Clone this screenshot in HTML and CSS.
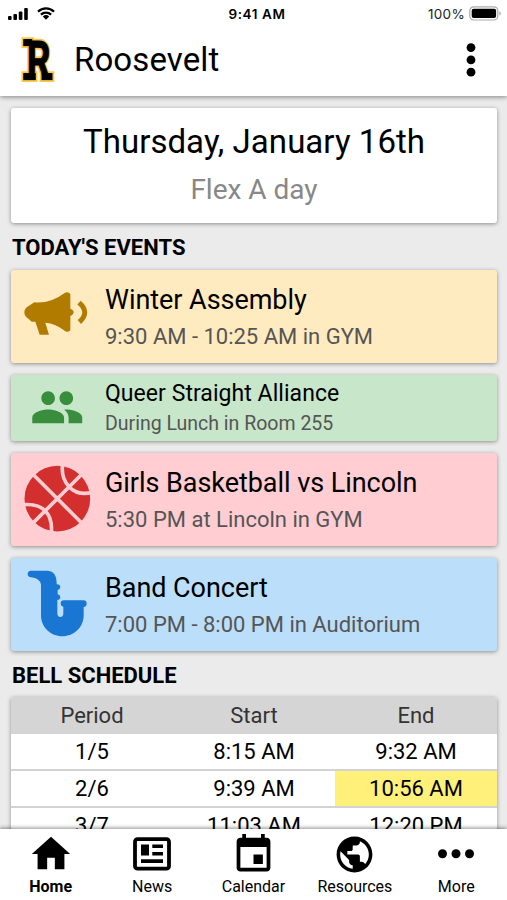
FILE: index.html
```html
<!DOCTYPE html>
<html lang="en">
<head>
<meta charset="utf-8">
<title>Roosevelt</title>
<link rel="stylesheet" href="styles.css">
</head>
<body>
<div class="app">
  <header class="top">
    <div class="status">
      <div class="status-left">
        <svg class="signal" viewBox="0 0 20 12"><rect x="0" y="8" width="3.6" height="4" rx="1"/><rect x="5.4" y="6" width="3.6" height="6" rx="1"/><rect x="10.8" y="3.5" width="3.6" height="8.5" rx="1"/><rect x="16.2" y="0" width="3.6" height="12" rx="1"/></svg>
        <svg class="wifi" viewBox="0 0 18 13"><path d="M1 4.6a11.6 11.6 0 0 1 16 0M3.9 7.6a7.4 7.4 0 0 1 10.2 0" fill="none" stroke="#000" stroke-width="2.2"/><path d="M5.8 9.6a4.7 4.7 0 0 1 6.4 0L9 12.8z"/></svg>
      </div>
      <span class="clock">9:41 AM</span>
      <div class="status-right">
        <span class="charge">100%</span>
        <svg class="battery" viewBox="0 0 32 15"><rect x=".8" y=".8" width="28" height="13.2" rx="4" fill="#fff" stroke="#aaa" stroke-width="1.2"/><rect x="2.7" y="2.7" width="24.4" height="9.4" rx="2"/><path d="M30.3 5.2q1.5.6 1.5 2.2t-1.5 2.2z" fill="#aaa"/></svg>
      </div>
    </div>
    <div class="bar">
      <svg class="logo" viewBox="0 0 36 48">
        <g class="logo-edge"><text transform="translate(18.7 42.7) scale(.68 1)" text-anchor="middle">R</text><rect x="3.8" y="3.6" width="8" height="6"/><rect x="3.8" y="37.6" width="11.4" height="6"/><rect x="22" y="37.6" width="10" height="6"/></g>
        <g class="logo-face"><text transform="translate(18.7 42.7) scale(.68 1)" text-anchor="middle">R</text><rect x="3.8" y="3.6" width="8" height="6"/><rect x="3.8" y="37.6" width="11.4" height="6"/><rect x="22" y="37.6" width="10" height="6"/></g>
      </svg>
      <h1>Roosevelt</h1>
      <svg class="menu" viewBox="0 0 10 34"><circle cx="5" cy="4.6" r="4.4"/><circle cx="5" cy="16.9" r="4.4"/><circle cx="5" cy="29.2" r="4.4"/></svg>
    </div>
  </header>

  <main>
    <section class="card day"><div class="date">Thursday, January 16th</div><div class="kind">Flex A day</div></section>

    <h2>TODAY'S EVENTS</h2>
    <div class="events">
      <article class="card event gold">
        <div class="pic"><svg viewBox="63 60 216 216"><path d="M103 127Q150 132 194 99Q204 94 211 102V146Q221 150 221 157T211 168V211Q202 220 192 211Q168 191 136 188L147 224H119L106 185H95L86 177Q73 169 73 157T86 138Z"/><path d="M237 128Q271 157 238 186" fill="none" stroke="currentColor" stroke-width="15"/></svg></div>
        <div><div class="name">Winter Assembly</div><div class="info">9:30 AM - 10:25 AM in GYM</div></div>
      </article>
      <article class="card event green small">
        <div class="pic"><svg viewBox="0 0 24 24"><path d="M16 11c1.66 0 2.99-1.34 2.99-3S17.66 5 16 5s-3 1.34-3 3 1.34 3 3 3zm-8 0c1.66 0 2.99-1.34 2.99-3S9.66 5 8 5 5 6.34 5 8s1.34 3 3 3zm0 2c-2.33 0-7 1.17-7 3.5V19h14v-2.5c0-2.33-4.67-3.5-7-3.5zm8 0c-.29 0-.62.02-.97.05 1.16.84 1.97 1.97 1.97 3.45V19h6v-2.5c0-2.33-4.67-3.5-7-3.5z"/></svg></div>
        <div><div class="name">Queer Straight Alliance</div><div class="info">During Lunch in Room 255</div></div>
      </article>
      <article class="card event red">
        <div class="pic"><svg viewBox="63 54 216 216"><circle cx="172" cy="161" r="98.5"/><path class="seam" d="M101 90L245 234M243 90L101 232M188 58Q182 98 207 125T275 143M70 179Q114 175 136 198T154 264"/></svg></div>
        <div><div class="name">Girls Basketball vs Lincoln</div><div class="info">5:30 PM at Lincoln in GYM</div></div>
      </article>
      <article class="card event blue">
        <div class="pic"><svg viewBox="63 370 216 216"><path d="M93 378H144Q170 380 170 415V419Q181 420 181 427T173 436V449Q181 451 181 458T172 466V506Q172 517 181 517T190 506V486Q182 484 182 477Q182 467 192 467H250Q260 467 260 477Q260 485 251 487V512C251 548 222 575 187 575S123 548 123 512V420Q119 400 93 398Q83 397 83 388T93 378Z"/></svg></div>
        <div><div class="name">Band Concert</div><div class="info">7:00 PM - 8:00 PM in Auditorium</div></div>
      </article>
    </div>

    <h2 class="bell">BELL SCHEDULE</h2>
    <table class="card">
      <thead><tr><th>Period</th><th>Start</th><th>End</th></tr></thead>
      <tbody>
        <tr><td>1/5</td><td>8:15 AM</td><td>9:32 AM</td></tr>
        <tr><td>2/6</td><td>9:39 AM</td><td class="now">10:56 AM</td></tr>
        <tr><td>3/7</td><td>11:03 AM</td><td>12:20 PM</td></tr>
      </tbody>
    </table>
  </main>

  <nav>
    <a class="on"><svg class="i-home" viewBox="0 0 24 24"><path d="M10 20v-6h4v6h5v-8h3L12 3 2 12h3v8z"/></svg><span>Home</span></a>
    <a><svg class="i-news" viewBox="0 0 38 46"><rect x="2" y="8.1" width="34" height="29.6" rx="2.5" fill="none" stroke="#000" stroke-width="3.8"/><path d="M8 13.5h8v11H8zM19.3 13.5h10.7v3.6H19.3zM19.3 21h10.7v3.5H19.3zM8 28.3h22v3.6H8z"/></svg><span>News</span></a>
    <a><svg class="i-cal" viewBox="0 0 24 24"><path d="M17 12h-5v5h5v-5zM16 1v2H8V1H6v2H5c-1.11 0-1.99.9-1.99 2L3 19c0 1.1.89 2 2 2h14c1.1 0 2-.9 2-2V5c0-1.1-.9-2-2-2h-1V1h-2zm3 18H5V8h14v11z"/></svg><span>Calendar</span></a>
    <a><svg class="i-globe" viewBox="0 0 24 24"><path d="M12 2C6.48 2 2 6.48 2 12s4.48 10 10 10 10-4.48 10-10S17.52 2 12 2zm-1 17.93c-3.95-.49-7-3.85-7-7.93 0-.62.08-1.21.21-1.79L9 15v1c0 1.1.9 2 2 2v1.93zm6.9-2.54c-.26-.81-1-1.39-1.9-1.39h-1v-3c0-.55-.45-1-1-1H8v-2h2c.55 0 1-.45 1-1V7h2c1.1 0 2-.9 2-2v-.41c2.93 1.19 5 4.06 5 7.41 0 2.08-.8 3.97-2.1 5.39z"/></svg><span>Resources</span></a>
    <a><svg class="i-more" viewBox="0 0 38 46"><circle cx="5.5" cy="22.7" r="4.5"/><circle cx="19" cy="22.7" r="4.5"/><circle cx="32.5" cy="22.7" r="4.5"/></svg><span>More</span></a>
  </nav>
</div>
</body>
</html>
```
FILE: styles.css
```css
* { box-sizing: border-box; }
body { margin: 0; font-family: Roboto, sans-serif; color: #000; background: #ebebeb; }
.app { height: 900px; display: flex; flex-direction: column; overflow: hidden; }
svg { display: block; flex: none; }
h1, h2 { margin: 0; }

.top { flex: none; height: 96px; background: #fff; box-shadow: 0 1px 5px rgba(0,0,0,.45); z-index: 1; }
.status { height: 27px; display: grid; grid-template-columns: 1fr auto 1fr; align-items: center; padding: 0 6px 0 8px; font-family: Inter, sans-serif; }
.status-left, .status-right { display: flex; align-items: center; }
.status-right { justify-content: flex-end; gap: 4px; }
.signal { width: 20px; height: 12px; }
.wifi { width: 18px; height: 13px; margin-left: 9px; }
.clock { font-size: 13.5px; font-weight: 600; letter-spacing: .6px; margin-left: 5px; }
.charge { font-size: 13.5px; letter-spacing: .3px; color: #222; }
.battery { width: 32px; height: 15px; }
.bar { height: 66px; display: flex; align-items: center; padding: 0 31px 0 20px; }
.logo { width: 36px; height: 48px; font-weight: 700; font-size: 54.5px; overflow: visible; }
.logo-edge { fill: #fbc540; stroke: #fbc540; stroke-width: 4.6px; }
.logo-face { fill: #000; stroke: #000; stroke-width: 1px; }
h1 { flex: 1; margin: -2px 0 0 18px; font-size: 33px; font-weight: 400; letter-spacing: .1px; }
.menu { width: 10px; height: 34px; }

main { flex: 1; min-height: 0; overflow: hidden; padding: 12px 10px 0 11px; }
.card { border-radius: 3px; box-shadow: 0 1px 4px rgba(0,0,0,.4); }
.day { height: 115px; background: #fff; text-align: center; padding-top: 14px; }
.date { font-size: 33px; line-height: 40px; letter-spacing: .05px; }
.kind { margin-top: 9px; font-size: 28px; line-height: 38px; color: #888; }
h2 { height: 47px; padding-left: 1px; font-size: 22px; line-height: 49px; font-weight: 700; }
.events { display: flex; flex-direction: column; gap: 12px; }
.event { height: 93px; display: flex; align-items: center; }
.pic { width: 94px; display: flex; padding-left: 10px; }
.pic svg { width: 72px; height: 72px; margin-top: -1px; fill: currentColor; }
.name { margin-top: 4px; font-size: 27px; line-height: 36px; letter-spacing: -.05px; }
.info { font-size: 22px; line-height: 38px; color: #555; }
.small { height: 66px; }
.small .pic { padding-left: 19px; }
.small .pic svg { width: 54.5px; height: 54.5px; }
.small .name { margin-top: 0; font-size: 23px; line-height: 30px; letter-spacing: .05px; }
.small .info { font-size: 19.5px; line-height: 29px; }
.gold { background: #ffebbf; } .gold .pic { color: #b17b00; }
.green { background: #c8e6c9; } .green .pic { color: #388e3c; }
.red { background: #ffcdd2; } .red .pic { color: #d32f2f; }
.blue { background: #bbdefb; } .blue .pic { color: #1976d2; }
.seam { fill: none; stroke: #ffcdd2; stroke-width: 11; }
.bell { height: 46px; }
table { width: 100%; border-spacing: 0; table-layout: fixed; overflow: hidden; background: #fff; text-align: center; font-size: 22px; }
th, td { padding: 0; height: 36.7px; line-height: 35px; }
th { font-weight: 400; background: #d5d5d5; color: #333; }
td { padding-top: 1px; line-height: 34px; border-bottom: 2px solid #d3d3d3; }
.now { background: #fff07a; }

nav { flex: none; height: 71px; display: grid; grid-template-columns: repeat(5, 1fr); background: #fff; box-shadow: 0 -1px 4px rgba(0,0,0,.45); z-index: 1; }
nav a { display: flex; flex-direction: column; align-items: center; font-size: 16px; line-height: 20px; padding-top: 2px; }
nav span { margin-top: auto; margin-bottom: 5px; }
nav .on { font-weight: 700; }
.i-home { width: 46px; height: 46px; }
.i-news, .i-more { width: 38px; height: 46px; }
.i-cal { width: 45px; height: 45px; margin-top: 1px; }
.i-globe { width: 43px; height: 43px; margin-top: 2px; }
```
